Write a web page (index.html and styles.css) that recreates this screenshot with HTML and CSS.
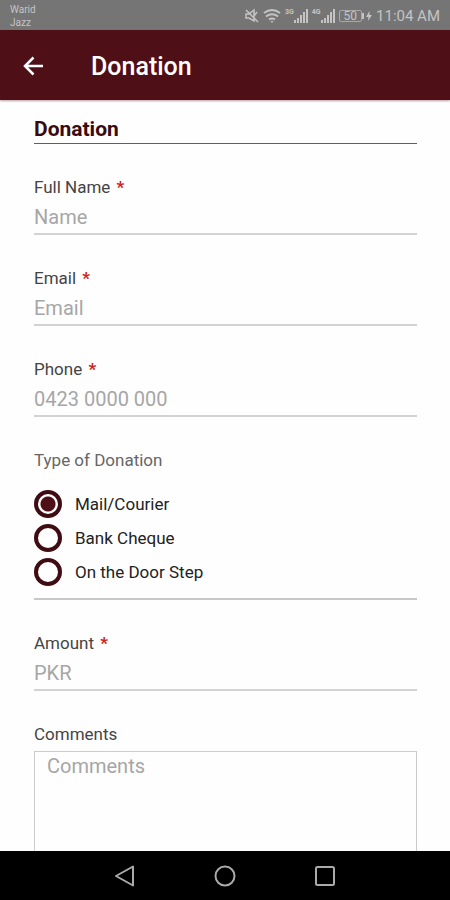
FILE: index.html
```html
<!DOCTYPE html>
<html lang="en">
<head>
  <meta charset="UTF-8" />
  <meta name="viewport" content="width=device-width, initial-scale=1.0" />
  <title>Donation</title>
  <link rel="stylesheet" href="styles.css">
</head>
<body>
  <div class="status-bar">
    <div class="carrier">Warid<br>Jazz</div>
    <div class="status-icons">
      <!-- muted -->
      <svg width="14" height="16" viewBox="0 0 14 16" fill="none" stroke="currentColor" stroke-width="1.5">
        <path d="M1 6h3l5-4v11l-5-3H1zM1 2l12 12M12 4l-3 4" />
      </svg>
      <!-- wifi -->
      <svg width="18" height="16" viewBox="0 0 18 16" fill="none" stroke="currentColor" stroke-width="2">
        <path d="M1 5q8-6 16 0M3 8.5q6-4.5 12 0M6 11.5q3-2 6 0" />
        <path d="M7.5 13h3L9 15z" fill="currentColor" stroke="none" />
      </svg>
      <div class="signal">
        <span>3G</span>
        <svg width="14" height="14" viewBox="0 0 14 14" fill="currentColor">
          <path d="M0 11h2v3H0zM3 9h2v5H3zM6 6h2v8H6zM9 3h2v11H9zM12 0h2v14h-2z" />
        </svg>
      </div>
      <div class="signal">
        <span>4G</span>
        <svg width="14" height="14" viewBox="0 0 14 14" fill="currentColor">
          <path d="M0 11h2v3H0zM3 9h2v5H3zM6 6h2v8H6zM9 3h2v11H9zM12 0h2v14h-2z" />
        </svg>
      </div>
      <div class="battery">
        <span class="battery-level">50</span>
        <svg width="10" height="12" viewBox="0 0 10 12" fill="currentColor">
          <path d="M0 3h2v6H0zM7.5 1L4 7h2.5L6 11l4-6H7.5z" />
        </svg>
      </div>
      <span class="clock">11:04 AM</span>
    </div>
  </div>

  <header class="app-bar">
    <button type="button" class="back-btn" aria-label="Back">
      <svg width="22" height="22" viewBox="0 0 22 22" fill="none" stroke="currentColor" stroke-width="2.5">
        <path d="M21 10H3M11.500 1.500L3 10l8.500 8.500" />
      </svg>
    </button>
    <h1>Donation</h1>
  </header>

  <main class="content">
    <h2>Donation</h2>

    <form class="donation-form">
      <div class="field">
        <label for="name">Full Name <span class="required">*</span></label>
        <input type="text" id="name" placeholder="Name" />
      </div>

      <div class="field">
        <label for="email">Email <span class="required">*</span></label>
        <input type="email" id="email" placeholder="Email" />
      </div>

      <div class="field">
        <label for="phone">Phone <span class="required">*</span></label>
        <input type="tel" id="phone" placeholder="0423 0000 000" />
      </div>

      <fieldset class="donation-type">
        <legend>Type of Donation</legend>
        <label><input type="radio" name="type" value="mail" checked /> Mail/Courier</label>
        <label><input type="radio" name="type" value="cheque" /> Bank Cheque</label>
        <label><input type="radio" name="type" value="door" /> On the Door Step</label>
      </fieldset>

      <div class="field">
        <label for="amount">Amount <span class="required">*</span></label>
        <input type="text" id="amount" placeholder="PKR" />
      </div>

      <div class="field">
        <label for="comments">Comments</label>
        <textarea id="comments" rows="6" placeholder="Comments"></textarea>
      </div>
    </form>
  </main>

  <nav class="nav-bar">
    <button type="button" aria-label="Back">
      <svg width="22" height="22" viewBox="0 0 22 22"><path d="M19 1.5v19L2 11z" /></svg>
    </button>
    <button type="button" aria-label="Home">
      <svg width="22" height="22" viewBox="0 0 22 22"><circle cx="11" cy="11" r="9.5" /></svg>
    </button>
    <button type="button" aria-label="Recent apps">
      <svg width="22" height="22" viewBox="0 0 22 22"><rect x="2" y="2" width="18" height="18" rx="1.5" /></svg>
    </button>
  </nav>
</body>
</html>
```

FILE: styles.css
```css
* {
  box-sizing: border-box;
}

body {
  display: flex;
  flex-direction: column;
  height: 100vh;
  margin: 0;
  font-family: Roboto, sans-serif;
  font-size: 17px;
  line-height: 20px;
  color: #444;
  background: #fefefe;
}

button {
  display: flex;
  padding: 0;
  border: none;
  background: none;
  color: inherit;
  cursor: pointer;
}

/* Status bar */
.status-bar {
  display: flex;
  flex-shrink: 0;
  justify-content: space-between;
  align-items: center;
  height: 30px;
  padding: 2px 10px 0;
  background: #757575;
  color: #c4c4c4;
}

.carrier {
  font-size: 10px;
  line-height: 13px;
}

.status-icons {
  display: flex;
  align-items: center;
  gap: 4px;
}

.signal {
  display: flex;
  align-items: flex-start;
}

.signal span {
  font-size: 7px;
  font-weight: 700;
  line-height: 7px;
}

.battery {
  display: flex;
  align-items: center;
}

.battery-level {
  padding: 0 4px;
  border: 1px solid #a8a8a8;
  border-radius: 2px;
  font-size: 12px;
  line-height: 10px;
}

.clock {
  font-size: 15px;
}

/* App bar */
.app-bar {
  display: flex;
  flex-shrink: 0;
  align-items: center;
  gap: 47px;
  height: 70px;
  padding: 4px 22px 0;
  background: #4f0f16;
  box-shadow: 0 1px 2px rgba(79, 15, 22, 0.4);
  color: #fff;
}

h1 {
  margin: 0;
  font-size: 25px;
  font-weight: 500;
  line-height: 30px;
}

/* Form */
.content {
  flex: 1;
  min-height: 0;
  padding: 19px 33px 0 34px;
  overflow: hidden;
}

h2 {
  margin: 0 0 33px;
  padding-bottom: 4px;
  border-bottom: 1px solid #6a5a5c;
  font-size: 21px;
  font-weight: 700;
  line-height: 20px;
  color: #3a0a10;
}

.donation-form {
  display: flex;
  flex-direction: column;
  gap: 33px;
}

.field {
  display: flex;
  flex-direction: column;
}

.required {
  margin-left: 2px;
  font-weight: 700;
  color: #d02020;
}

.field input {
  width: 100%;
  height: 38px;
  padding: 4px 0 0;
  border: none;
  border-bottom: 2px solid #d2d2d2;
  background: none;
  font-family: inherit;
  font-size: 20px;
  color: #333;
}

.field textarea {
  margin-top: 7px;
  padding: 2px 12px;
  border: 1px solid #ccc;
  background: none;
  font-family: inherit;
  font-size: 20px;
  line-height: 24px;
  color: #333;
  resize: none;
}

::placeholder {
  color: #a6a6a6;
}

.donation-type {
  display: flex;
  flex-direction: column;
  margin: 0;
  padding: 17px 0 9px;
  border: none;
  border-bottom: 2px solid #c8c8c8;
}

.donation-type legend {
  padding: 0;
  color: #666;
}

.donation-type label {
  display: flex;
  align-items: center;
  gap: 13px;
  height: 34px;
  color: #222;
}

.donation-type input {
  appearance: none;
  width: 28px;
  height: 28px;
  margin: 0;
  border: 4px solid #3f0c13;
  border-radius: 50%;
}

.donation-type input:checked {
  background: radial-gradient(circle, #4f0f16 7px, transparent 8px);
}

/* System navigation */
.nav-bar {
  display: flex;
  flex-shrink: 0;
  justify-content: center;
  align-items: center;
  gap: 78px;
  height: 49px;
  background: #000;
  color: #aaa;
}

.nav-bar svg {
  fill: none;
  stroke: currentColor;
  stroke-width: 2;
  stroke-linejoin: round;
}
```
